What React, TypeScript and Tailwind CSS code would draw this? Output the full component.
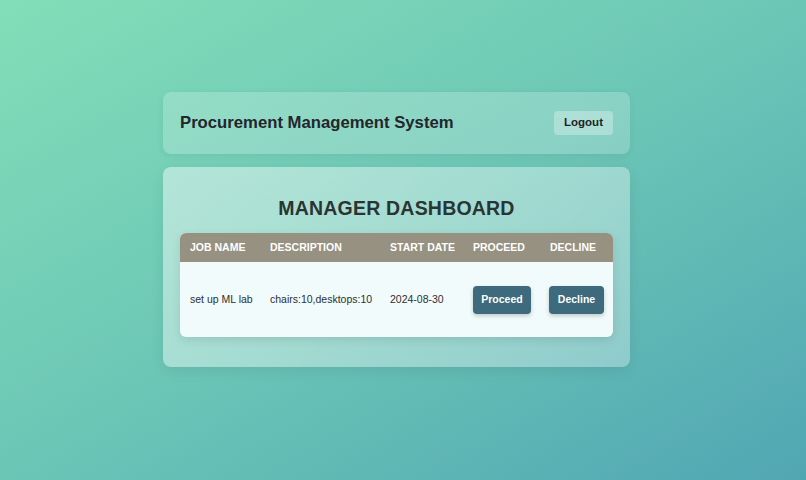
export default function App() {
  return (
    <div
      className="h-[480px] w-full overflow-hidden bg-[linear-gradient(150deg,#82deb8_0%,#6cc6b6_50%,#51a6b3_100%)] pt-[92px]"
      style={{ fontFamily: '"Liberation Sans", Arial, sans-serif' }}
    >
      <div className="ml-[163px] flex w-[467px] flex-col gap-[13px]">
        {/* Header */}
        <header className="flex h-[62px] items-center justify-between rounded-lg bg-white/20 px-[17px] shadow-[0_2px_8px_rgba(0,0,0,0.06)]">
          <h1 className="text-[16.7px] font-bold text-[#23262b]">Procurement Management System</h1>
          <button className="h-6 w-[59px] rounded bg-white/30 text-[11.5px] font-bold text-[#1f2326]">
            Logout
          </button>
        </header>

        {/* Dashboard */}
        <main className="rounded-lg bg-[linear-gradient(135deg,rgba(255,255,255,0.45),rgba(255,255,255,0.3))] px-[17px] pt-[30px] pb-[30px] shadow-[0_4px_14px_rgba(0,0,0,0.08)]">
          <h2 className="text-center text-[19.5px] leading-[23px] font-bold tracking-[0.2px] text-[#2a3433]">
            MANAGER DASHBOARD
          </h2>
          <div className="mt-[13px] overflow-hidden rounded-md bg-[#f1fbfb] shadow-[0_3px_10px_rgba(0,0,0,0.1)]">
            <div className="grid h-[29px] grid-cols-[80px_120px_83px_77px_73px] items-center bg-[#969181] text-[10.5px] font-bold text-white">
              <div className="pl-[10px]">JOB NAME</div>
              <div className="pl-[10px]">DESCRIPTION</div>
              <div className="pl-[10px]">START DATE</div>
              <div className="pl-[10px]">PROCEED</div>
              <div className="pl-[10px]">DECLINE</div>
            </div>
            <div className="grid h-[75px] grid-cols-[80px_120px_83px_77px_73px] items-center text-[10.5px] text-[#2d2f31]">
              <div className="pl-[10px]">set up ML lab</div>
              <div className="pl-[10px]">chairs:10,desktops:10</div>
              <div className="pl-[10px]">2024-08-30</div>
              <div className="pl-[10px]">
                <button className="h-[28px] w-[58px] rounded bg-[#3d6a7c] text-[10.5px] font-bold text-white shadow-[0_2px_4px_rgba(0,0,0,0.2)]">
                  Proceed
                </button>
              </div>
              <div className="pl-[9px]">
                <button className="h-[28px] w-[55px] rounded bg-[#3d6a7c] text-[10.5px] font-bold text-white shadow-[0_2px_4px_rgba(0,0,0,0.2)]">
                  Decline
                </button>
              </div>
            </div>
          </div>
        </main>
      </div>
    </div>
  )
}
